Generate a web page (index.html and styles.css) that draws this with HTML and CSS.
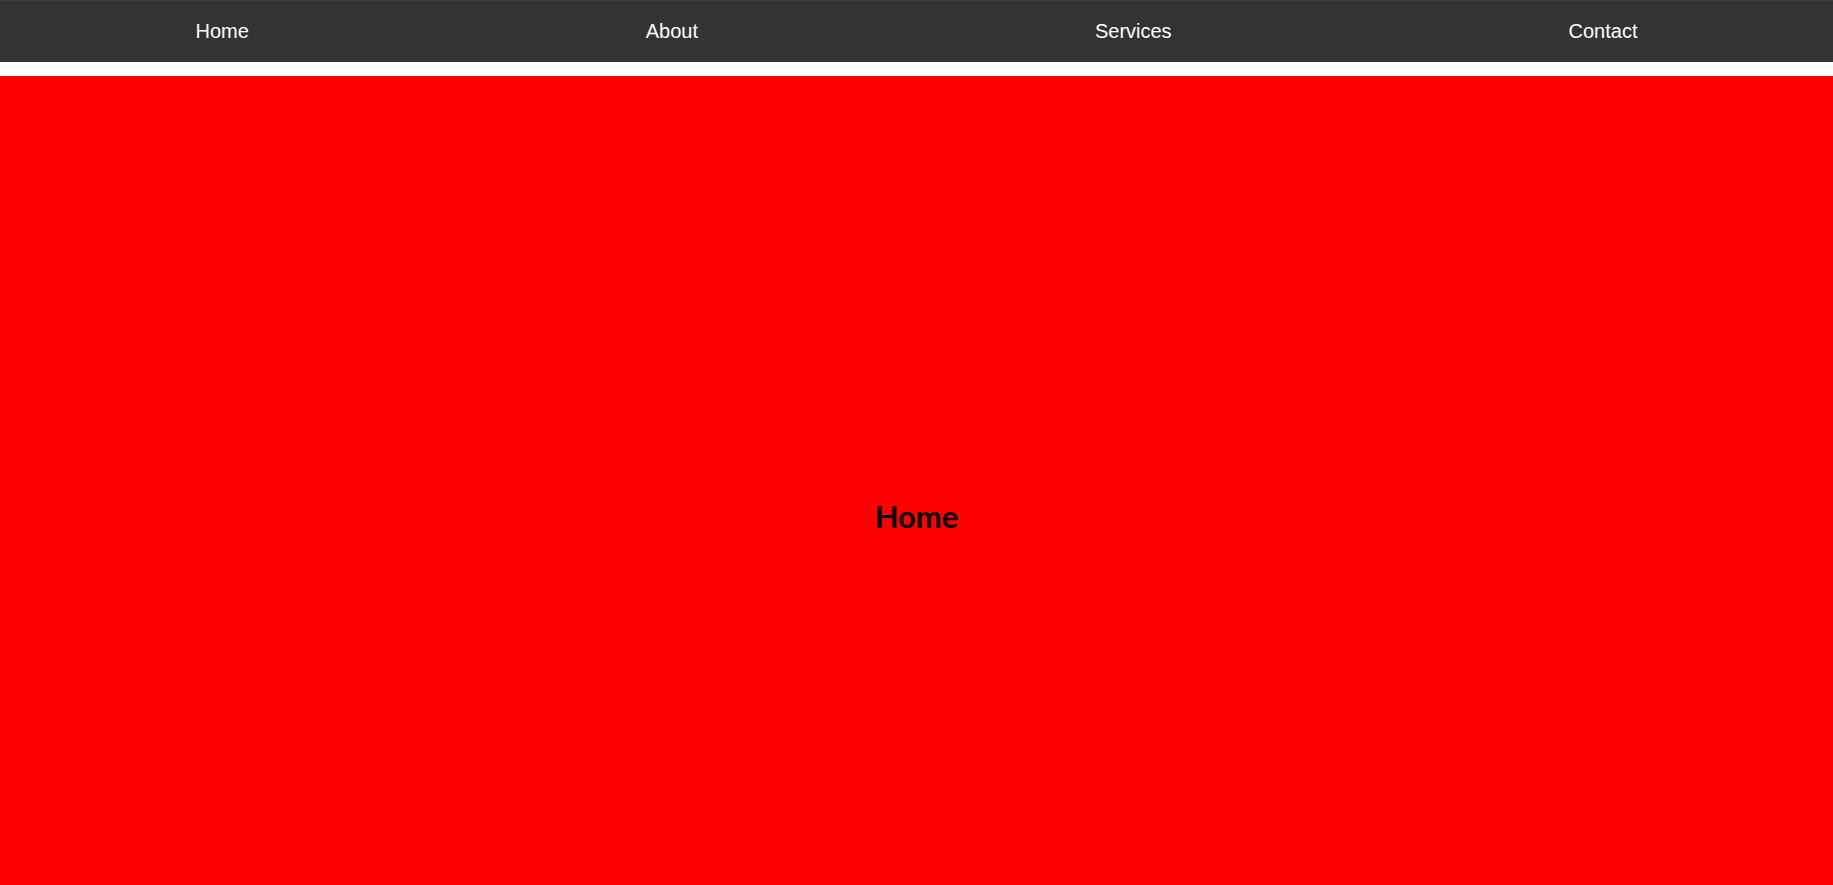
FILE: index.html
```html
<!DOCTYPE html>
<html>
<head>
<meta charset="utf-8">
<title>Home</title>
<link rel="stylesheet" href="styles.css">
</head>
<body>
<nav class="navbar">
  <ul class="nav-list">
    <li class="nav-item"><a href="#home">Home</a></li>
    <li class="nav-item"><a href="#about">About</a></li>
    <li class="nav-item"><a href="#services">Services</a></li>
    <li class="nav-item"><a href="#contact">Contact</a></li>
  </ul>
</nav>
<section class="section section-home" id="home">
  <h1 class="section-title">Home</h1>
</section>
</body>
</html>
```
FILE: styles.css
```css
html, body {
  margin: 0;
  padding: 0;
}
body {
  font-family: "Liberation Sans", Arial, sans-serif;
  background: #fff;
}
.navbar {
  background: #333;
  height: 62px;
  display: flex;
  align-items: center;
  box-shadow: inset 0 1px 1px rgba(255,255,255,0.06);
}
.nav-list {
  list-style: none;
  margin: 0 -3px;
  padding: 0;
  width: calc(100% + 6px);
  display: flex;
  justify-content: space-around;
}
.nav-item a {
  color: #fff;
  text-decoration: none;
  font-size: 20px;
  line-height: 23px;
}
.section {
  margin-top: 14px;
  height: 100vh;
  display: flex;
  align-items: center;
  justify-content: center;
}
.section-home {
  background: #ff0000;
}
.section-title {
  margin: 0;
  padding-bottom: 6px;
  font-family: Lato, "Noto Sans", sans-serif;
  font-weight: 700;
  font-size: 31px;
  line-height: 36px;
  color: #000;
}
```
